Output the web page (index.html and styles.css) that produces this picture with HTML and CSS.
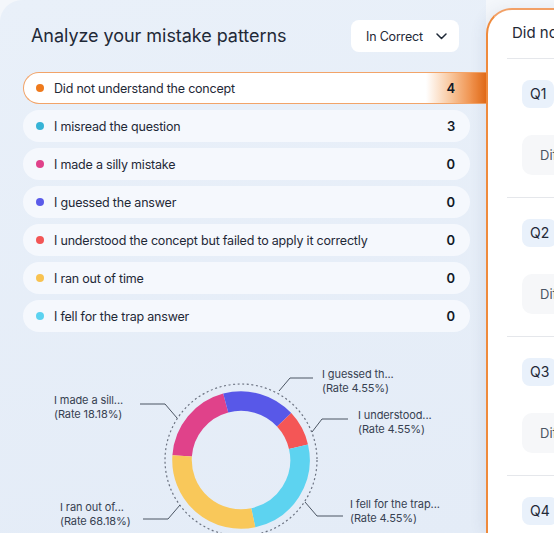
FILE: index.html
```html
<!DOCTYPE html>
<html>
<head>
    <title>Mistake Patterns</title>
    <link rel="stylesheet" href="styles.css">
</head>
<body>
<div class="page">
    <section class="analysis">
        <div class="analysis-head">
            <h1>Analyze your mistake patterns</h1>
            <button class="filter">
                <span>In Correct</span>
                <svg width="11" height="7" viewBox="0 0 11 7"><path d="M1 1l4.5 4.5L10 1" fill="none" stroke="#1f2937" stroke-width="1.5" stroke-linecap="round" stroke-linejoin="round"/></svg>
            </button>
        </div>

        <ul class="reasons">
            <li class="reason active"><i class="dot" style="background:#ef7a1c"></i><span class="label">Did not understand the concept</span><b class="count">4</b></li>
            <li class="reason"><i class="dot" style="background:#36b3d6"></i><span class="label">I misread the question</span><b class="count">3</b></li>
            <li class="reason"><i class="dot" style="background:#e0428a"></i><span class="label">I made a silly mistake</span><b class="count">0</b></li>
            <li class="reason"><i class="dot" style="background:#5b5be9"></i><span class="label">I guessed the answer</span><b class="count">0</b></li>
            <li class="reason"><i class="dot" style="background:#f25555"></i><span class="label">I understood the concept but failed to apply it correctly</span><b class="count">0</b></li>
            <li class="reason"><i class="dot" style="background:#f8c250"></i><span class="label">I ran out of time</span><b class="count">0</b></li>
            <li class="reason"><i class="dot" style="background:#5bd2f0"></i><span class="label">I fell for the trap answer</span><b class="count">0</b></li>
        </ul>

        <svg class="chart" width="486" height="195" viewBox="0 0 486 195">
            <circle cx="241" cy="122" r="76" fill="none" stroke="#6b7280" stroke-width="1.2" stroke-dasharray="2 2.6"/>
            <g fill="none" stroke-width="19.5">
                <path d="M182.14 117.88A59 59 0 0 1 225.73 65.01" stroke="#e0428a"/>
                <path d="M225.73 65.01A59 59 0 0 1 284.15 81.76" stroke="#5858e8"/>
                <path d="M284.15 81.76A59 59 0 0 1 298.49 108.73" stroke="#f45656"/>
                <path d="M298.49 108.73A59 59 0 0 1 253.27 179.71" stroke="#5dd3f0"/>
                <path d="M253.27 179.71A59 59 0 0 1 182.14 117.88" stroke="#f9c85a"/>
            </g>
            <g fill="none" stroke="#4b5563" stroke-width="1">
                <polyline points="140,66 165,66 177,80"/>
                <polyline points="143,181 168,181 180,167"/>
                <polyline points="313,40 290,40 279,53"/>
                <polyline points="348,81 322,81 312,94"/>
                <polyline points="343,178 317,178 305,164"/>
            </g>
            <g class="chart-label">
                <text x="54" y="66">I made a sill...</text>
                <text x="54" y="80">(Rate 18.18%)</text>
                <text x="60" y="173">I ran out of...</text>
                <text x="60" y="187">(Rate 68.18%)</text>
                <text x="322" y="40">I guessed th...</text>
                <text x="322" y="54">(Rate 4.55%)</text>
                <text x="358" y="81">I understood...</text>
                <text x="358" y="95">(Rate 4.55%)</text>
                <text x="350" y="170">I fell for the trap...</text>
                <text x="350" y="184">(Rate 4.55%)</text>
            </g>
        </svg>
    </section>

    <section class="questions">
        <h2>Did not understand the concept</h2>
        <div class="question">
            <span class="qnum">Q1</span>
            <div class="meta">Difficulty: Medium</div>
        </div>
        <div class="question">
            <span class="qnum">Q2</span>
            <div class="meta">Difficulty: Easy</div>
        </div>
        <div class="question">
            <span class="qnum">Q3</span>
            <div class="meta">Difficulty: Hard</div>
        </div>
        <div class="question">
            <span class="qnum">Q4</span>
            <div class="meta">Difficulty: Medium</div>
        </div>
    </section>
</div>
</body>
</html>
```

FILE: styles.css
```css
body {
    margin: 0;
    background-color: #f4f7fb;
    font-family: 'Inter', 'Noto Sans', sans-serif;
    color: #1f2937;
    overflow: hidden;
}
.page {
    display: flex;
    width: 554px;
    height: 533px;
    overflow: hidden;
}
.analysis {
    flex: 0 0 486px;
    background: linear-gradient(170deg, #e9f0f9 0%, #e4ecf7 100%);
    border-top-left-radius: 22px;
}
.analysis-head {
    display: flex;
    justify-content: space-between;
    align-items: center;
    padding: 20px 27px 0 31px;
}
h1 {
    margin: 0;
    font-size: 18px;
    font-weight: 400;
    line-height: 32px;
    letter-spacing: -0.05px;
    color: #1f2937;
}
.filter {
    display: flex;
    align-items: center;
    justify-content: space-between;
    width: 108px;
    height: 32px;
    padding: 0 12px 0 15px;
    border: none;
    border-radius: 8px;
    background-color: white;
    font-family: inherit;
    font-size: 12.5px;
    letter-spacing: -0.2px;
    color: #1f2937;
}
.reasons {
    list-style: none;
    margin: 20px 0 0;
    padding: 0 16px 0 23px;
    display: flex;
    flex-direction: column;
    gap: 6px;
}
.reason {
    display: flex;
    align-items: center;
    box-sizing: border-box;
    height: 32px;
    padding: 0 15px 0 13px;
    border-radius: 16px;
    background-color: #f5f8fd;
    font-size: 12.5px;
    letter-spacing: -0.2px;
}
.reason.active {
    margin-right: -16px;
    border: 1px solid #f2a469;
    border-right: none;
    border-radius: 16px 0 0 16px;
    padding-left: 12px;
    padding-right: 31px;
    background: linear-gradient(90deg, #fff 0%, #fff 87%, #f9cba4 92%, #e96c14 100%);
}
.dot {
    width: 8px;
    height: 8px;
    border-radius: 50%;
    margin-right: 10px;
}
.label {
    flex: 1;
}
.count {
    font-weight: 600;
    font-size: 13px;
    color: #111827;
}
.chart {
    display: block;
    margin-top: 6px;
}
.chart-label {
    font-size: 11px;
    letter-spacing: -0.1px;
    fill: #374151;
}
.questions {
    flex: 0 0 320px;
    margin-top: 8px;
    box-sizing: border-box;
    border-left: 2px solid #ef8a3c;
    border-top: 2px solid #f2a066;
    border-top-left-radius: 26px;
    background-color: white;
    padding-left: 19px;
    box-shadow: -4px 0 14px rgba(60, 80, 120, 0.08);
}
h2 {
    margin: 0;
    height: 48px;
    line-height: 46px;
    padding-left: 5px;
    font-size: 15px;
    font-weight: 400;
    white-space: nowrap;
    border-bottom: 1px solid #e5e7eb;
}
.question {
    padding: 21px 0 22px 15px;
    border-bottom: 1px solid #e5e7eb;
}
.qnum {
    display: inline-block;
    height: 28px;
    line-height: 28px;
    padding: 0 8px;
    border-radius: 8px;
    background-color: #e9f1fb;
    font-size: 14px;
}
.meta {
    margin-top: 27px;
    height: 40px;
    line-height: 40px;
    padding-left: 18px;
    border-radius: 10px;
    background-color: #f6f7f9;
    font-size: 13px;
    color: #4b5563;
    white-space: nowrap;
}
```
